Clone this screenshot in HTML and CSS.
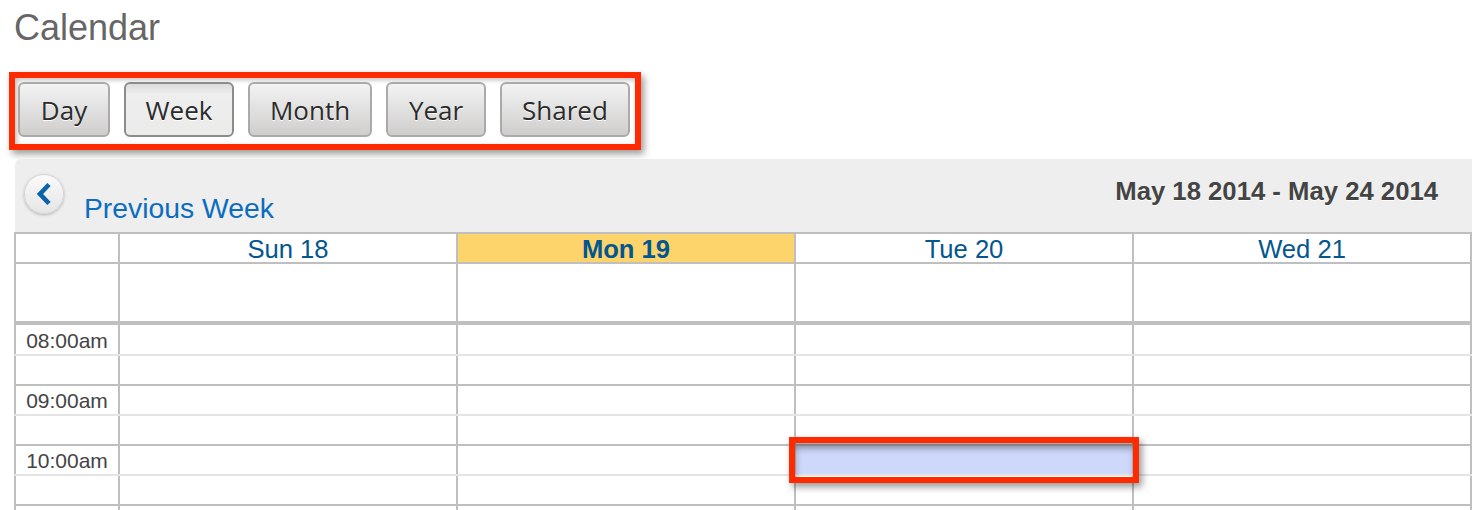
FILE: index.html
```html
<!DOCTYPE html>
<html lang="en">
<head>
    <meta charset="UTF-8">
    <meta name="viewport" content="width=device-width, initial-scale=1.0">
    <title>Calendar</title>
    <link rel="stylesheet" href="styles.css">
</head>
<body>
    <h1 class="page-title">Calendar</h1>

    <div class="view-tabs">
        <button class="tab tab-day">Day</button>
        <button class="tab tab-week active">Week</button>
        <button class="tab tab-month">Month</button>
        <button class="tab tab-year">Year</button>
        <button class="tab tab-shared">Shared</button>
    </div>

    <div class="calendar">
        <div class="toolbar">
            <a class="prev-btn" href="#">
                <svg width="18" height="26" viewBox="0 0 18 26"><path d="M14 3.5 L5 13 L14 22.5" fill="none" stroke="#0b62ad" stroke-width="4.6"/></svg>
            </a>
            <a class="prev-link" href="#">Previous Week</a>
            <div class="date-range">May 18 2014 - May 24 2014</div>
        </div>

        <table class="week">
            <tr class="head-row">
                <th class="time-col"></th>
                <th>Sun 18</th>
                <th class="today">Mon 19</th>
                <th>Tue 20</th>
                <th>Wed 21</th>
            </tr>
            <tr class="allday-row">
                <td></td><td></td><td></td><td></td><td></td>
            </tr>
            <tr class="hour first-hour">
                <td class="time">08:00am</td><td></td><td></td><td></td><td></td>
            </tr>
            <tr class="half">
                <td></td><td></td><td></td><td></td><td></td>
            </tr>
            <tr class="hour">
                <td class="time">09:00am</td><td></td><td></td><td></td><td></td>
            </tr>
            <tr class="half">
                <td></td><td></td><td></td><td></td><td></td>
            </tr>
            <tr class="hour">
                <td class="time">10:00am</td><td></td><td></td>
                <td class="selected"><div class="callout"></div></td>
                <td></td>
            </tr>
            <tr class="half">
                <td></td><td></td><td></td><td></td><td></td>
            </tr>
            <tr class="last-row">
                <td></td><td></td><td></td><td></td><td></td>
            </tr>
        </table>
    </div>
</body>
</html>
```

FILE: styles.css
```css
html, body {
    margin: 0;
    height: 510px;
    overflow: hidden;
    background: #fff;
}

body {
    font-family: "Liberation Sans", Arial, sans-serif;
}

.page-title {
    margin: 0;
    padding: 7px 0 0 14px;
    height: 72px;
    box-sizing: border-box;
    font-size: 36px;
    line-height: 42px;
    font-weight: normal;
    color: #666;
}

.view-tabs {
    display: inline-flex;
    gap: 14px;
    margin-left: 9px;
    padding: 4px 5px 7px 3px;
    border: 6px solid #ff2a00;
    box-shadow: 3px 4px 7px rgba(0, 0, 0, 0.4), inset 2px 2px 5px rgba(0, 0, 0, 0.25);
    vertical-align: top;
}

.tab {
    height: 55px;
    padding: 0;
    border: 2px solid #aaa;
    border-radius: 6px;
    background: linear-gradient(#f3f3f3, #cfcecd);
    font-family: "Open Sans", sans-serif;
    font-size: 26px;
    color: #2b2b2b;
    text-shadow: 0 1px 0 #fff;
}

.tab-day { width: 92px; }
.tab-week { width: 110px; }
.tab-month { width: 124px; }
.tab-year { width: 100px; }
.tab-shared { width: 130px; }

.tab.active {
    border-color: #8c8c8c;
    background: linear-gradient(#dcdcdc, #eee 20%, #ebebea);
}

.calendar {
    margin: 9px 0 0 15px;
    width: 1457px;
}

.toolbar {
    position: relative;
    display: flex;
    height: 73px;
    box-sizing: border-box;
    background: #eee;
    border-top-left-radius: 6px;
}

.prev-btn {
    display: flex;
    align-items: center;
    justify-content: center;
    width: 40px;
    height: 40px;
    margin: 15px 0 0 9px;
    box-sizing: border-box;
    border-radius: 50%;
    background: linear-gradient(#fafafa, #e6e6e6);
    border: 1px solid #d6d6d6;
    box-shadow: 0 1px 3px rgba(0, 0, 0, 0.25);
}

.prev-link {
    margin: 33px 0 0 20px;
    font-size: 28.3px;
    line-height: 32px;
    height: 32px;
    color: #0c6dbd;
    text-decoration: none;
}

.date-range {
    margin: 17px 34px 0 auto;
    font-size: 25.7px;
    line-height: 30px;
    height: 30px;
    font-weight: bold;
    color: #444;
    text-shadow: 0 1px 0 #fff;
}

.week {
    width: 1458px;
    table-layout: fixed;
    border-collapse: collapse;
    margin-left: -1px;
}

.week th,
.week td {
    padding: 0;
    border: 2px solid #bfbfbf;
    box-sizing: border-box;
}

.time-col {
    width: 104px;
}

.head-row th {
    height: 30px;
    padding-top: 2px;
    font-size: 25.6px;
    line-height: 26px;
    font-weight: normal;
    color: #03568f;
}

.head-row th.today {
    background: #fdd46b;
    font-weight: bold;
}

.allday-row td {
    height: 60px;
    border-bottom-width: 4px;
}

.hour td {
    height: 30px;
    border-bottom: 2px solid #e4e4e4;
}

.first-hour td {
    height: 32px;
}

.half td {
    height: 30px;
}

.last-row td {
    height: 5px;
    border-bottom: none;
}

.week td.time {
    padding-top: 2px;
    text-align: center;
    font-size: 21px;
    line-height: 24px;
    color: #444;
}

.week td.selected {
    position: relative;
    background: #ced8fb;
}

.callout {
    position: absolute;
    left: -7px;
    top: -9px;
    width: 350px;
    height: 46px;
    box-sizing: border-box;
    border: 6px solid #ff2a00;
    box-shadow: 3px 4px 7px rgba(0, 0, 0, 0.4), inset 1px 6px 7px -1px rgba(0, 0, 0, 0.38);
}
```
